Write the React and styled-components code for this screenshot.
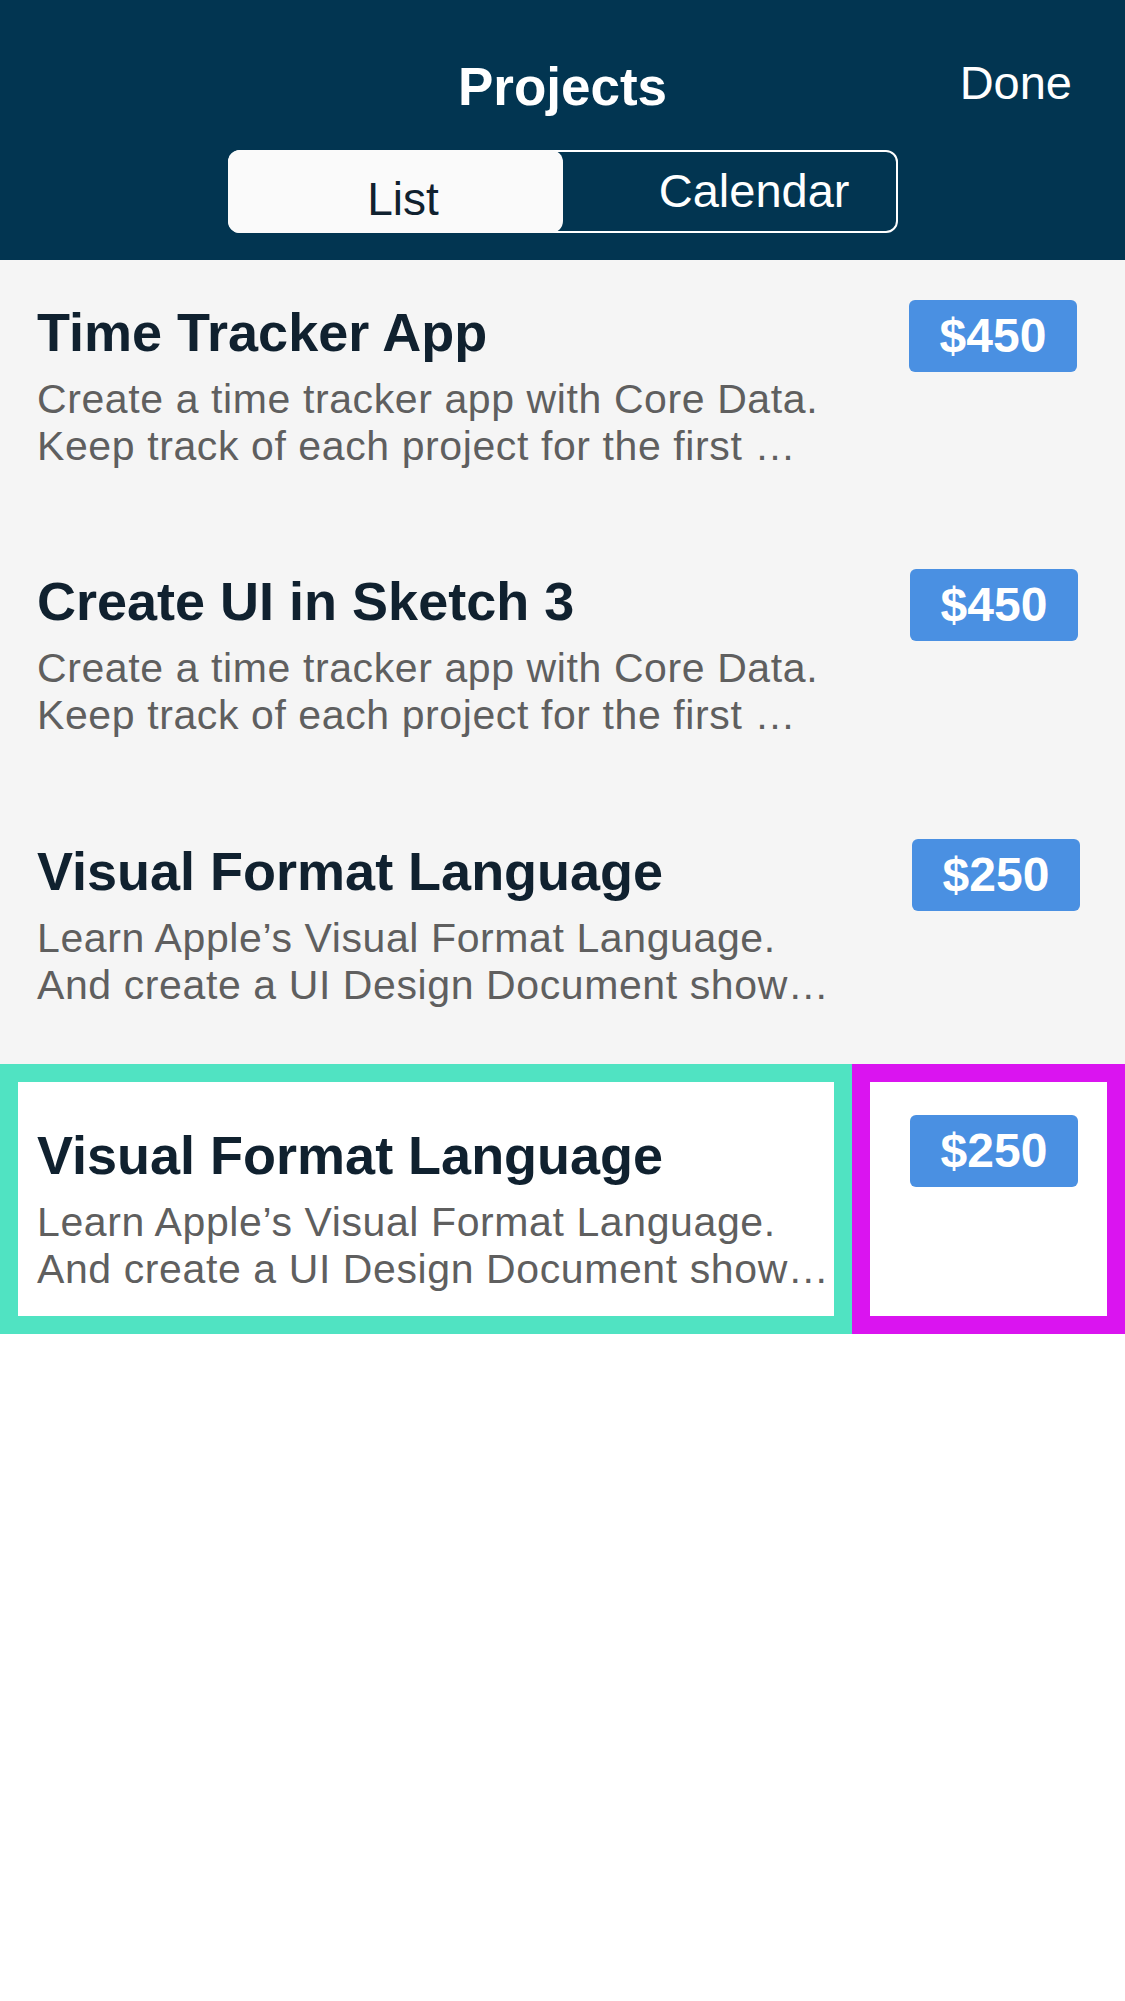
import React, { useState } from 'react'
import styled, { createGlobalStyle } from 'styled-components';

const GlobalStyle = createGlobalStyle`
  body {
    margin: 0;
    background: #ffffff;
    font-family: "Liberation Sans", Arial, sans-serif;
  }
`;

const Header = styled.header`
  background-color: #023551;
  padding: 53px 53px 27px;
  display: flex;
  flex-direction: column;
`;

const TopBar = styled.div`
  display: grid;
  grid-template-columns: 1fr auto 1fr;
  align-items: start;
`;

const Title = styled.h1`
  grid-column: 2;
  margin: 4px 0 0;
  font-size: 53px;
  line-height: 60px;
  font-weight: 700;
  color: #ffffff;
`;

const Done = styled.span`
  justify-self: end;
  font-size: 47px;
  line-height: 60px;
  color: #ffffff;
  cursor: pointer;
`;

const Segmented = styled.div`
  display: flex;
  box-sizing: border-box;
  width: 670px;
  height: 83px;
  margin: 33px auto 0;
  border: 2px solid #ffffff;
  border-radius: 12px;
`;

const Segment = styled.div`
  display: flex;
  box-sizing: border-box;
  cursor: pointer;
  ${({ $active }) => $active ? `
    flex: 0 0 335px;
    margin: -2px 0 -2px -2px;
    justify-content: center;
    padding: 26px 0 0 16px;
    background-color: #fafafa;
    border-radius: 12px;
    color: #10212f;
    font-size: 46px;
    line-height: 46px;
  ` : `
    flex: 1;
    justify-content: flex-end;
    padding: 15px 46px 0 0;
    color: #ffffff;
    font-size: 47px;
    line-height: 47px;
  `}
`;

const List = styled.div`
  background-color: #f5f5f5;
`;

const Row = styled.div`
  display: flex;
  justify-content: space-between;
  align-items: flex-start;
  box-sizing: border-box;
  height: 268px;
  padding: ${({ $shift }) => 40 + ($shift || 0)}px ${({ $shift }) => 48 - ($shift || 0)}px 0 37px;
`;

const Text = styled.div`
  width: 795px;
  margin-top: ${({ $top }) => $top || 0}px;
`;

const RowTitle = styled.div`
  font-size: 54px;
  line-height: 60px;
  font-weight: 700;
  color: #10212f;
  white-space: nowrap;
`;

const Desc = styled.div`
  margin-top: 14px;
  font-size: 41px;
  line-height: 47px;
  letter-spacing: 0.6px;
  color: #5f5f5f;
  white-space: nowrap;
`;

const Badge = styled.div`
  width: 168px;
  height: 72px;
  border-radius: 6px;
  background-color: #4a90e2;
  color: #ffffff;
  font-size: 48px;
  line-height: 72px;
  font-weight: 700;
  text-align: center;
`;

const HighlightRow = styled.div`
  display: flex;
  height: 270px;
`;

const Cell = styled.div`
  box-sizing: border-box;
  background-color: #ffffff;
  border: 18px solid ${({ $color }) => $color};
`;

const TextCell = styled(Cell)`
  width: 852px;
  padding: 43px 0 0 19px;
`;

const PriceCell = styled(Cell)`
  flex: 1;
  padding: 33px 0 0 40px;
`;

const projects = [
  {
    title: 'Time Tracker App',
    lines: ['Create a time tracker app with Core Data.', 'Keep track of each project for the first …'],
    price: '$450',
  },
  {
    title: 'Create UI in Sketch 3',
    lines: ['Create a time tracker app with Core Data.', 'Keep track of each project for the first …'],
    price: '$450',
    shift: 1,
  },
  {
    title: 'Visual Format Language',
    lines: ['Learn Apple’s Visual Format Language.', 'And create a UI Design Document show…'],
    price: '$250',
    shift: 3,
  },
];

const highlighted = projects[2];

const ProjectText = ({ project, top }) => (
  <Text $top={top}>
    <RowTitle>{project.title}</RowTitle>
    <Desc>
      {project.lines.map(line => <div key={line}>{line}</div>)}
    </Desc>
  </Text>
)

const App = () => {

  const [view, setView] = useState('list');

  return (
    <>
      <GlobalStyle />
      <Header>
        <TopBar>
          <Title>Projects</Title>
          <Done>Done</Done>
        </TopBar>
        <Segmented>
          <Segment $active={view === 'list'} onClick={() => setView('list')}>List</Segment>
          <Segment $active={view === 'calendar'} onClick={() => setView('calendar')}>Calendar</Segment>
        </Segmented>
      </Header>
      <List>
        {projects.map(p => (
          <Row key={p.title} $shift={p.shift}>
            <ProjectText project={p} top={2} />
            <Badge>{p.price}</Badge>
          </Row>
        ))}
      </List>
      <HighlightRow>
        <TextCell $color="#50e3c2">
          <ProjectText project={highlighted} />
        </TextCell>
        <PriceCell $color="#da14f0">
          <Badge>{highlighted.price}</Badge>
        </PriceCell>
      </HighlightRow>
    </>
  )
}

export default App
